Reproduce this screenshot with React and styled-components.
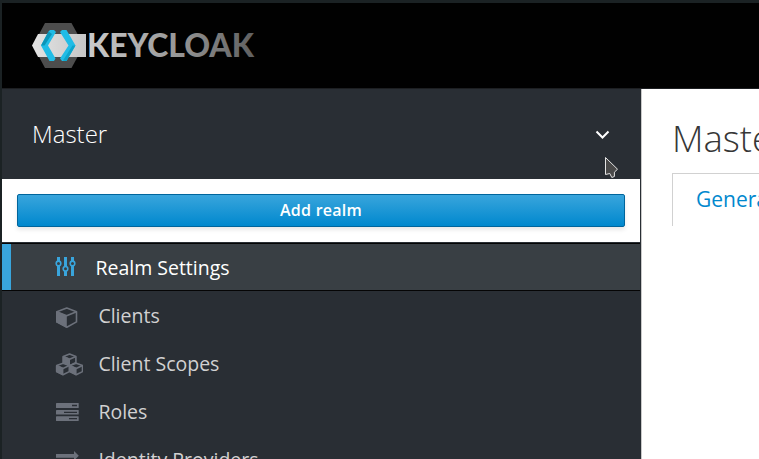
import React from 'react';
import styled, { createGlobalStyle, css } from 'styled-components';

const GlobalStyle = createGlobalStyle`
  *, *::before, *::after { box-sizing: border-box; }
  html, body { margin: 0; height: 100%; overflow: hidden; }
  body { font-family: "Open Sans", "Noto Sans", sans-serif; background: #1b2224; }
`;

const Window = styled.div`
  position: relative;
  display: flex;
  flex-direction: column;
  width: 759px;
  height: 459px;
  padding: 3px 0 0 2px;
  overflow: hidden;
  background: #1b2224;
`;

const Masthead = styled.header`
  flex: none;
  height: 86px;
  padding: 20px 0 0 30px;
  background: #010101;
  border-bottom: 1px solid #1d1f22;
`;

const Logo = styled.svg`
  display: block;
  width: 226px;
  height: 46px;
`;

const Wordmark = styled.text`
  font-family: Lato, sans-serif;
  font-size: 32px;
  font-weight: 900;
`;

const Body = styled.div`
  display: flex;
  flex: 1;
  min-height: 0;
`;

const Sidebar = styled.aside`
  flex: none;
  width: 639px;
  background: #292e34;
  border-right: 1px solid #292e34;
  overflow: hidden;
`;

const RealmSelector = styled.div`
  display: flex;
  align-items: center;
  justify-content: space-between;
  height: 90px;
  padding: 0 30px 1px;
  color: #fff;
  font-size: 24px;
  font-weight: 300;
`;

const Chevron = styled.svg`
  width: 15px;
  height: 10px;
  margin-top: 2px;
`;

const RealmMenu = styled.div`
  height: 63px;
  padding: 15px;
  background: #fff;
`;

const AddButton = styled.button`
  display: block;
  width: 100%;
  height: 33px;
  padding: 0 0 1px;
  border: 1px solid #00659c;
  border-radius: 2px;
  background: linear-gradient(#39a5dc, #0088ce);
  box-shadow: 0 3px 4px rgba(3, 3, 3, 0.09);
  color: #fff;
  font: 600 16px/30px "Open Sans", sans-serif;
  letter-spacing: 0.25px;
`;

const NavList = styled.ul`
  margin: 0;
  padding: 1px 0 0;
  list-style: none;
`;

const NavItem = styled.li`
  display: flex;
  align-items: center;
  height: 48px;
  padding-left: 53px;
  color: #d1d1d1;
  font-size: 19.5px;
  line-height: 28px;
  white-space: nowrap;
  ${({ $active }) => $active && css`
    margin-bottom: 1px;
    padding-top: 2px;
    border: solid #050505;
    border-width: 1px 0;
    box-shadow: inset 9px 0 #39a5dc;
    background: #393f44;
    color: #fff;
  `}
`;

const NavIcon = styled.svg`
  flex: none;
  width: 28px;
  height: 24px;
  margin-right: ${({ $gap }) => $gap}px;
  margin-bottom: ${({ $active }) => ($active ? 2 : 0)}px;
  color: ${({ $active }) => ($active ? '#39a5dc' : '#6c717b')};
`;

const Content = styled.main`
  flex: 1;
  min-width: 0;
  padding: 24px 0 0 30px;
  border-left: 1px solid #c9c9c9;
  background: #fff;
  overflow: hidden;
`;

const Title = styled.h1`
  margin: 0;
  height: 60px;
  color: #363636;
  font-size: 36.5px;
  font-weight: 300;
  line-height: 50px;
`;

const Tab = styled.div`
  width: 150px;
  height: 53px;
  padding-left: 23px;
  border: solid #d1d1d1;
  border-width: 1px 0 0 1px;
  color: #0088ce;
  font-size: 21px;
  line-height: 50px;
`;

const Pointer = styled.svg`
  position: absolute;
  left: 604px;
  top: 156px;
  width: 16px;
  height: 24px;
`;

const Sliders = () => (
  <g fill="none" stroke="currentColor">
    <path strokeWidth="3" d="M3.5 2v4M3.5 11v10M10.5 2v9M10.5 16v5M17.5 2v4M17.5 11v10" />
    <g strokeWidth="1.6">
      <circle cx="3.5" cy="8.4" r="2.3" />
      <circle cx="10.5" cy="13.8" r="2.3" />
      <circle cx="17.5" cy="8.4" r="2.3" />
    </g>
  </g>
);

const Cube = () => (
  <g stroke="currentColor" strokeWidth="1.6" strokeLinejoin="round" fill="none">
    <path d="M1.8 7.7 11.8 4.1l9.7 3.6v10.2l-9.7 5.3-10-5.3Z" />
    <path d="m1.8 7.7 9.8 4 9.9-4" />
    <path fill="currentColor" d="M1.8 8.3 11 12v10.6l-9.2-4.9Z" />
  </g>
);

const MiniCube = ({ x, y }) => (
  <g transform={`translate(${x} ${y})`} stroke="currentColor" strokeWidth="1.6" strokeLinejoin="round" fill="none">
    <path d="M.7 3.2 7 .8l6.3 2.4v6L7 12.4.7 9.2Z" />
    <path d="M.7 3.2 7 6l6.3-2.8" />
    <path fill="currentColor" d="M.7 3.5 6.6 6v6L.7 9.2Z" />
  </g>
);

const Cubes = () => (
  <>
    <MiniCube x={7.6} y={1.2} />
    <MiniCube x={1} y={10.4} />
    <MiniCube x={14.2} y={10.4} />
  </>
);

const Tasks = () => (
  <g>
    <rect x="1" y="3" width="22.7" height="5" rx=".6" fill="currentColor" />
    <rect x="1" y="10" width="22.7" height="4.5" rx=".6" fill="currentColor" />
    <rect x="1" y="16.2" width="22.7" height="4.8" rx=".6" fill="currentColor" />
    <path stroke="#292e34" strokeWidth="1.3" d="M17 5.5h5M9 12.3h13M14 18.7h8" />
  </g>
);

const Exchange = () => (
  <g fill="currentColor">
    <path d="M1 6h18V3l4.8 4.8L19 12.6V9.8H1Z" />
    <path d="M24 15H6v-3l-5 5 5 5v-3.4h18Z" />
  </g>
);

const items = [
  { label: 'Realm Settings', Icon: Sliders, active: true, gap: 12.4 },
  { label: 'Clients', Icon: Cube, gap: 15.4 },
  { label: 'Client Scopes', Icon: Cubes, gap: 15.4 },
  { label: 'Roles', Icon: Tasks, gap: 15.4 },
  { label: 'Identity Providers', Icon: Exchange, gap: 15.4 },
];

const KeycloakLogo = () => (
  <Logo viewBox="0 0 226 46">
    <defs>
      <linearGradient id="band" x1="0" x2="1">
        <stop offset="0" stopColor="#e4e4e4" />
        <stop offset="1" stopColor="#c6c6c6" />
      </linearGradient>
      <linearGradient id="word" gradientUnits="userSpaceOnUse" x1="56" x2="222" y1="0" y2="0">
        <stop offset="0" stopColor="#cbcbcb" />
        <stop offset=".5" stopColor="#9b9b9b" />
        <stop offset="1" stopColor="#606060" />
      </linearGradient>
    </defs>
    <path fill="#4d4d4d" d="M13 0h26.5l6 11v23l-6 11H13L1 22.5Z" />
    <path fill="url(#band)" d="M6 11h48v23H6L0 22.5Z" />
    <path fill="#20bce6" d="m16.5 8.5 1.5-1.5h4l2 2-8 13.5 7.5 13-1.5 2.5h-4.5L9 22.5Z" />
    <path fill="#0c95b8" d="m16.5 8.5 3.5 2.5-7.5 11.5H9Z" />
    <path fill="#20bce6" d="m28 9 2-2h4.5l9 15.5L34.5 38H30l-2-2.5 8.5-13Z" />
    <path fill="#0ca5cc" d="M40.5 22.5h3L34.5 38l-3.5-.5Z" />
    <Wordmark x="55" y="34" textLength="167" lengthAdjust="spacingAndGlyphs" fill="url(#word)">KEYCLOAK</Wordmark>
  </Logo>
);

export default function App() {
  return (
    <Window>
      <GlobalStyle />
      <Masthead><KeycloakLogo /></Masthead>
      <Body>
        <Sidebar>
          <RealmSelector>
            Master
            <Chevron viewBox="0 0 15 10">
              <path d="m1.5 1.5 6 6 6-6" fill="none" stroke="#fff" strokeWidth="2" />
            </Chevron>
          </RealmSelector>
          <RealmMenu><AddButton>Add realm</AddButton></RealmMenu>
          <NavList>
            {items.map(({ label, Icon, active, gap }) => (
              <NavItem key={label} $active={active}>
                <NavIcon viewBox="0 0 28 24" $active={active} $gap={gap}><Icon /></NavIcon>
                {label}
              </NavItem>
            ))}
          </NavList>
        </Sidebar>
        <Content>
          <Title>Master</Title>
          <Tab>General</Tab>
        </Content>
      </Body>
      <Pointer viewBox="0 0 16 24">
        <path d="M1.5 1.5v17l4.3-1 2 4 2.6-1v-4.3l3.1-3Z" fill="#494949" stroke="#e4e4e4" />
      </Pointer>
    </Window>
  );
}
